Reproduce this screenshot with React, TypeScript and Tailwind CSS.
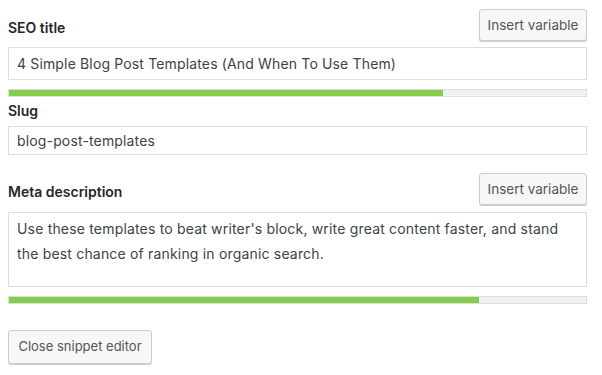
export default function App() {
  return (
    <div className="h-[375px] w-[602px] bg-white pl-2 pr-[15px] pt-[9px] font-['Inter',Arial,sans-serif] text-[#32373c]">
      {/* SEO title */}
      <div className="flex h-[32px] items-center justify-between">
        <label className="mt-[4px] text-[14px] font-semibold text-[#23282d]">SEO title</label>
        <button className="h-[32px] w-[108px] rounded-[3px] border border-[#ccc] bg-[#f7f7f7] text-[13.5px] text-[#555] shadow-[0_1px_0_#ccc]">
          Insert variable
        </button>
      </div>
      <div className="mt-[6px] flex h-[33px] items-center border border-[#ddd] px-2 text-[14px] tracking-[0.15px] text-[#3c434a]">
        4 Simple Blog Post Templates (And When To Use Them)
      </div>
      <div className="mt-[9px] h-[8px] border border-[#ddd] bg-[#f1f1f1]">
        <div className="h-full w-[434px] bg-[#84cc4b]" />
      </div>

      {/* Slug */}
      <label className="mt-[4px] block h-[20px] text-[14px] leading-[20px] font-semibold text-[#23282d]">Slug</label>
      <div className="mt-[5px] flex h-[29px] items-center border border-[#ddd] px-2 text-[14px] tracking-[0.15px] text-[#3c434a]">
        blog-post-templates
      </div>

      {/* Meta description */}
      <div className="mt-[18px] flex h-[32px] items-center justify-between">
        <label className="mt-[4px] text-[14px] font-semibold text-[#23282d]">Meta description</label>
        <button className="h-[32px] w-[108px] rounded-[3px] border border-[#ccc] bg-[#f7f7f7] text-[13.5px] text-[#555] shadow-[0_1px_0_#ccc]">
          Insert variable
        </button>
      </div>
      <div className="mt-[7px] h-[75px] border border-[#ddd] px-2 pt-[3px] text-[14px] leading-[25px] tracking-[0.18px] text-[#3c434a]">
        Use these templates to beat writer's block, write great content faster, and stand
        <br />
        the best chance of ranking in organic search.
      </div>
      <div className="mt-[9px] h-[8px] border border-[#ddd] bg-[#f1f1f1]">
        <div className="h-full w-[470px] bg-[#84cc4b]" />
      </div>

      <button className="mt-[26px] h-[34px] w-[144px] rounded-[3px] border border-[#ccc] bg-[#f7f7f7] text-[13px] text-[#555] shadow-[0_1px_0_#ccc]">
        Close snippet editor
      </button>
    </div>
  );
}
